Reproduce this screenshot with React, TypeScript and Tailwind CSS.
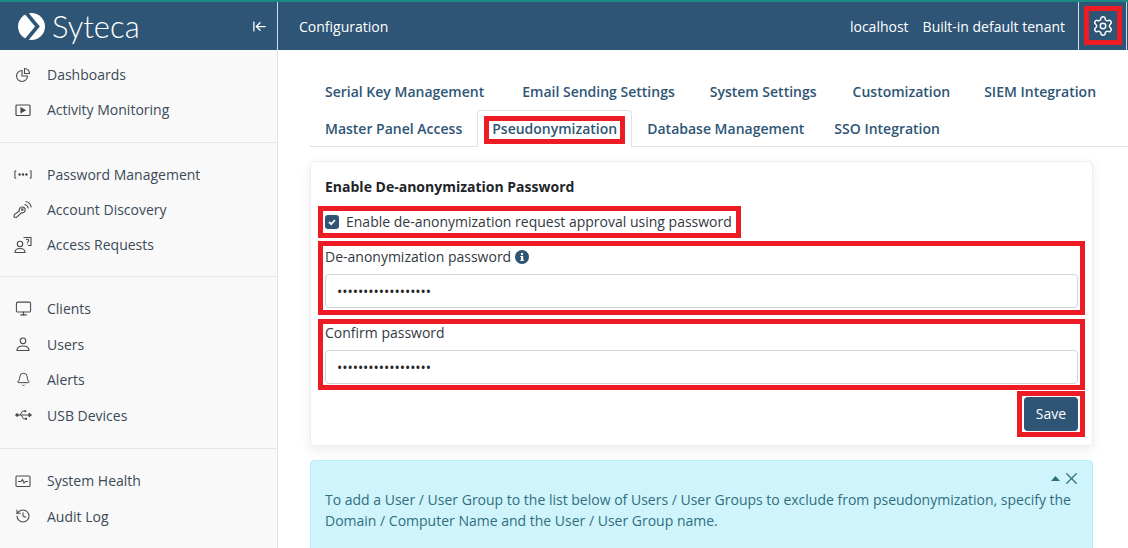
import { ArrowLeftToLine, Bell, History, Monitor, Settings, X } from "lucide-react";
import type { ReactNode } from "react";

const DashboardIcon = () => (
  <svg width="16" height="16" viewBox="0 0 16 16" fill="none" stroke="#4a4a4a" strokeWidth="1.1">
    <path d="M7 3.500a5.500 5.500 0 1 0 5.500 5.500H7z" />
    <path d="M9.500 1.500a5 5 0 0 1 5 5h-5z" />
  </svg>
);

const PlayIcon = () => (
  <svg width="16" height="14" viewBox="0 0 16 14" fill="none" stroke="#4a4a4a" strokeWidth="1.2">
    <rect x="1" y="2" width="14" height="10.500" rx="1" />
    <path d="M6 5l4 2.200L6 9.500z" fill="#4a4a4a" />
  </svg>
);

const SecretIcon = () => (
  <svg width="18" height="9" viewBox="0 0 20 10" fill="none" stroke="#3f3f3f" strokeWidth="1.1">
    <path d="M2.500 1H1v8h1.500M17.500 1H19v8h-1.500" />
    <circle cx="6.200" cy="5" r="1.300" fill="#3f3f3f" stroke="none" />
    <circle cx="10" cy="5" r="1.300" fill="#3f3f3f" stroke="none" />
    <circle cx="13.800" cy="5" r="1.300" fill="#3f3f3f" stroke="none" />
  </svg>
);

const DiscoveryIcon = () => (
  <svg width="20" height="19" viewBox="0 0 20 19" fill="none" stroke="#4a4a4a" strokeWidth="1.1">
    <path d="M1 17l.300-2.500 5-3.500c-.5-2 .7-3.800 2.600-4 2-.2 3.500 1.200 3.300 3.100-.2 2-2 3.200-4 2.700L3.500 17.500z" />
    <circle cx="9.300" cy="9.500" r=".8" />
    <path d="M11.500 4.500c2 .4 3.400 1.800 3.800 3.800M12.500 1.500c3 .5 5.200 2.700 5.800 5.800" />
  </svg>
);

const RequestIcon = () => (
  <svg width="18" height="18" viewBox="0 0 18 18" fill="none" stroke="#4a4a4a" strokeWidth="1.1">
    <circle cx="6" cy="8" r="2.700" />
    <path d="M1 16.500c0-3 1.800-4 5-4s5 1 5 4z" />
    <path d="M9.500 1.500h7.500v8h-3" />
    <path d="M12 3.800c.6-.8 2.700-.7 2.700.7 0 1-1.200 1.100-1.200 2.200M13.500 7.500v.8" />
  </svg>
);

const HealthIcon = () => (
  <svg width="16" height="14" viewBox="0 0 16 14" fill="none" stroke="#4a4a4a" strokeWidth="1.1">
    <rect x="1" y="2" width="14" height="10.500" rx="1" />
    <path d="M3 7.500h3l1.500-2L9 9l1.200-1.500H13" />
  </svg>
);

const UserIcon = () => (
  <svg width="14" height="15" viewBox="0 0 14 15" fill="none" stroke="#4a4a4a" strokeWidth="1.1">
    <circle cx="7" cy="3.800" r="2.800" />
    <path d="M1 13.500c0-3 1.600-4.500 6-4.500s6 1.500 6 4.500z" />
  </svg>
);

const UsbIcon = () => (
  <svg width="17" height="12" viewBox="0 0 17 12" fill="none" stroke="#4a4a4a" strokeWidth="1">
    <circle cx="2" cy="6" r="1.700" fill="#4a4a4a" stroke="none" />
    <path d="M2 6h12.500" />
    <path d="M14 4.200L16.500 6 14 7.800z" fill="#4a4a4a" />
    <path d="M5 6l2.500-3.800H9.500M6 6l2.500 3.800h1.500" />
    <circle cx="10.200" cy="2.200" r="1.100" fill="#4a4a4a" stroke="none" />
    <rect x="10" y="8.800" width="2" height="2" fill="#4a4a4a" stroke="none" />
  </svg>
);

const Logo = () => (
  <svg width="27" height="27" viewBox="0 0 27 27">
    <circle cx="13.500" cy="13.500" r="13.500" fill="#fff" />
    <path d="M7.500 -1L19.500 13.500 7.500 28" fill="none" stroke="#2e5575" strokeWidth="3.600" />
  </svg>
);

type NavItem = { icon: ReactNode; label: string };
type NavGroup = { box: string; row: string; items: NavItem[] };

const groups: NavGroup[] = [
  {
    box: "border-b pt-[7px] pb-[15px]",
    row: "h-[35px]",
    items: [
      { icon: <DashboardIcon />, label: "Dashboards" },
      { icon: <PlayIcon />, label: "Activity Monitoring" },
    ],
  },
  {
    box: "border-b pt-[14px] pb-[14px]",
    row: "h-[35px]",
    items: [
      { icon: <SecretIcon />, label: "Password Management" },
      { icon: <DiscoveryIcon />, label: "Account Discovery" },
      { icon: <RequestIcon />, label: "Access Requests" },
    ],
  },
  {
    box: "border-b pt-[14px] pb-[15px]",
    row: "h-[35.500px]",
    items: [
      { icon: <Monitor size={17} strokeWidth={1.5} color="#4a4a4a" />, label: "Clients" },
      { icon: <UserIcon />, label: "Users" },
      { icon: <Bell size={15} strokeWidth={1.6} color="#4a4a4a" />, label: "Alerts" },
      { icon: <UsbIcon />, label: "USB Devices" },
    ],
  },
  {
    box: "pt-[14px]",
    row: "h-[35.500px]",
    items: [
      { icon: <HealthIcon />, label: "System Health" },
      { icon: <History size={16} strokeWidth={1.6} color="#4a4a4a" />, label: "Audit Log" },
    ],
  },
];

const Sidebar = () => (
  <aside className="w-[278px] shrink-0 border-r border-[#e3e3e3] bg-[#f9f9f9]">
    {groups.map((group, i) => (
      <div key={i} className={`border-[#e5e5e5] ${group.box}`}>
        {group.items.map((item) => (
          <div key={item.label} className={`flex items-center ${group.row}`}>
            <span className="flex w-[47px] justify-center pr-[1px]">{item.icon}</span>
            <span className="text-[14px] text-[#3c4a57]">{item.label}</span>
          </div>
        ))}
      </div>
    ))}
  </aside>
);

const Tab = ({ label, active }: { label: string; active?: boolean }) => (
  <div
    className={
      active
        ? "flex h-[37px] items-center rounded-t border border-b-0 border-[#dee2e6] bg-white px-[14px] pb-[2px] text-[14px] font-semibold text-[#2e5575]"
        : "flex h-[37px] items-center px-[15px] text-[14px] font-semibold text-[#2e5575]"
    }
  >
    {label}
  </div>
);

const PasswordField = ({ label, info }: { label: string; info?: boolean }) => (
  <div>
    <div className="flex h-[22px] items-center gap-[4px] text-[14px] text-[#33393f]">
      <span className="pb-[2px]">{label}</span>
      {info && (
        <svg width="14" height="14" viewBox="0 0 14 14">
          <circle cx="7" cy="7" r="7" fill="#2e5575" />
          <rect x="6" y="6" width="2.200" height="4.500" fill="#fff" />
          <rect x="5.200" y="6" width="1.500" height="1" fill="#fff" />
          <rect x="5.200" y="9.800" width="3.800" height="1" fill="#fff" />
          <circle cx="7" cy="4" r="1.200" fill="#fff" />
        </svg>
      )}
    </div>
    <div className="mt-[6px] flex h-[34px] items-center rounded border border-[#ced4da] bg-white px-[11px] text-[14px] tracking-[-0.04px] text-[#212529]">
      ••••••••••••••••••
    </div>
  </div>
);

export default function App() {
  return (
    <div className="relative h-[548px] w-[1128px] overflow-hidden bg-white font-['Open_Sans','Noto_Sans',sans-serif]">
      <div className="h-[2px] bg-[#1a8a84]" />
      <header className="flex h-[48px] items-center bg-[#2e5575] text-white">
        <div className="flex h-full w-[278px] shrink-0 items-center border-r border-[#d5dde4] pl-[18px] pr-[10px]">
          <Logo />
          <span className="ml-[7px] font-['Lato',sans-serif] text-[31px] font-light leading-none">Syteca</span>
          <ArrowLeftToLine size={15} className="ml-auto" strokeWidth={2} />
        </div>
        <div className="pl-[21px] text-[14px]">Configuration</div>
        <div className="ml-auto mr-[1px] flex h-full items-center">
          <span className="text-[14px]">localhost</span>
          <span className="ml-[14px] text-[14px]">Built-in default tenant</span>
          <div className="ml-[13px] flex h-full w-[49px] items-center justify-center border-x border-[#d5dde4]">
            <Settings size={22} strokeWidth={1.6} />
          </div>
        </div>
      </header>
      <div className="flex h-[498px]">
        <Sidebar />
        <main className="min-w-0 flex-1 pl-[32px] pt-[23px]">
          <div className="flex h-[37px] items-center pl-[15px] text-[14px] font-semibold text-[#2e5575]">
            <span>Serial Key Management</span>
            <span className="ml-[38px]">Email Sending Settings</span>
            <span className="ml-[35px]">System Settings</span>
            <span className="ml-[36px]">Customization</span>
            <span className="ml-[34px]">SIEM Integration</span>
          </div>
          <div className="flex h-[37px] border-b border-[#dee2e6]">
            <Tab label="Master Panel Access" />
            <Tab label="Pseudonymization" active />
            <Tab label="Database Management" />
            <Tab label="SSO Integration" />
          </div>
          <section className="mt-[14px] h-[285px] w-[783px] rounded border border-[#eceef0] bg-white px-[14px] pt-[14px] shadow-[0_4px_12px_rgba(0,0,0,0.08)]">
            <h2 className="h-[22px] text-[14px] leading-[22px] font-bold text-[#212529]">Enable De-anonymization Password</h2>
            <label className="mt-[13px] flex h-[22px] items-center gap-[7px] text-[14px] text-[#33393f]">
              <span className="flex h-[14px] w-[14px] items-center justify-center rounded-[3px] bg-[#2e5575]">
                <svg width="10" height="10" viewBox="0 0 10 10" fill="none" stroke="#fff" strokeWidth="1.800">
                  <path d="M2 5l2.200 2.200L8 3" />
                </svg>
              </span>
              <span className="pb-[2px]">Enable de-anonymization request approval using password</span>
            </label>
            <div className="mt-[13px]">
              <PasswordField label="De-anonymization password" info />
            </div>
            <div className="mt-[14px]">
              <PasswordField label="Confirm password" />
            </div>
            <div className="mt-[13px] flex justify-end">
              <button className="h-[34px] w-[54px] rounded bg-[#2e5575] pb-[1px] text-[14px] text-white">Save</button>
            </div>
          </section>
          <section className="relative mt-[14px] h-[120px] w-[783px] rounded border border-[#b6effb] bg-[#cff4fc] px-[14px] pt-[28px] text-[14px] leading-[21px] text-[#2f6f7f]">
            <div className="absolute right-[11px] top-[8px] flex items-center gap-[2px]">
              <svg width="9" height="5" viewBox="0 0 9 5" fill="#2f6f7f">
                <path d="M0 5l4.500-5L9 5z" />
              </svg>
              <X size={19} strokeWidth={1.600} />
            </div>
            To add a User / User Group to the list below of Users / User Groups to exclude from pseudonymization, specify the Domain / Computer Name and the User / User Group name.
          </section>
        </main>
      </div>

      {/* annotation frames */}
      <div className="absolute left-[1084px] top-[6px] h-[39px] w-[38px] border-[5px] border-[#ed1c24]" />
      <div className="absolute left-[484px] top-[116px] h-[28px] w-[141px] border-[5px] border-[#ed1c24]" />
      <div className="absolute left-[318px] top-[206px] h-[32px] w-[423px] border-[5px] border-[#ed1c24]" />
      <div className="absolute left-[318px] top-[241px] h-[74px] w-[767px] border-[5px] border-[#ed1c24]" />
      <div className="absolute left-[318px] top-[319px] h-[71px] w-[767px] border-[5px] border-[#ed1c24]" />
      <div className="absolute left-[1017px] top-[391px] h-[46px] w-[68px] border-[5px] border-[#ed1c24]" />
    </div>
  );
}
